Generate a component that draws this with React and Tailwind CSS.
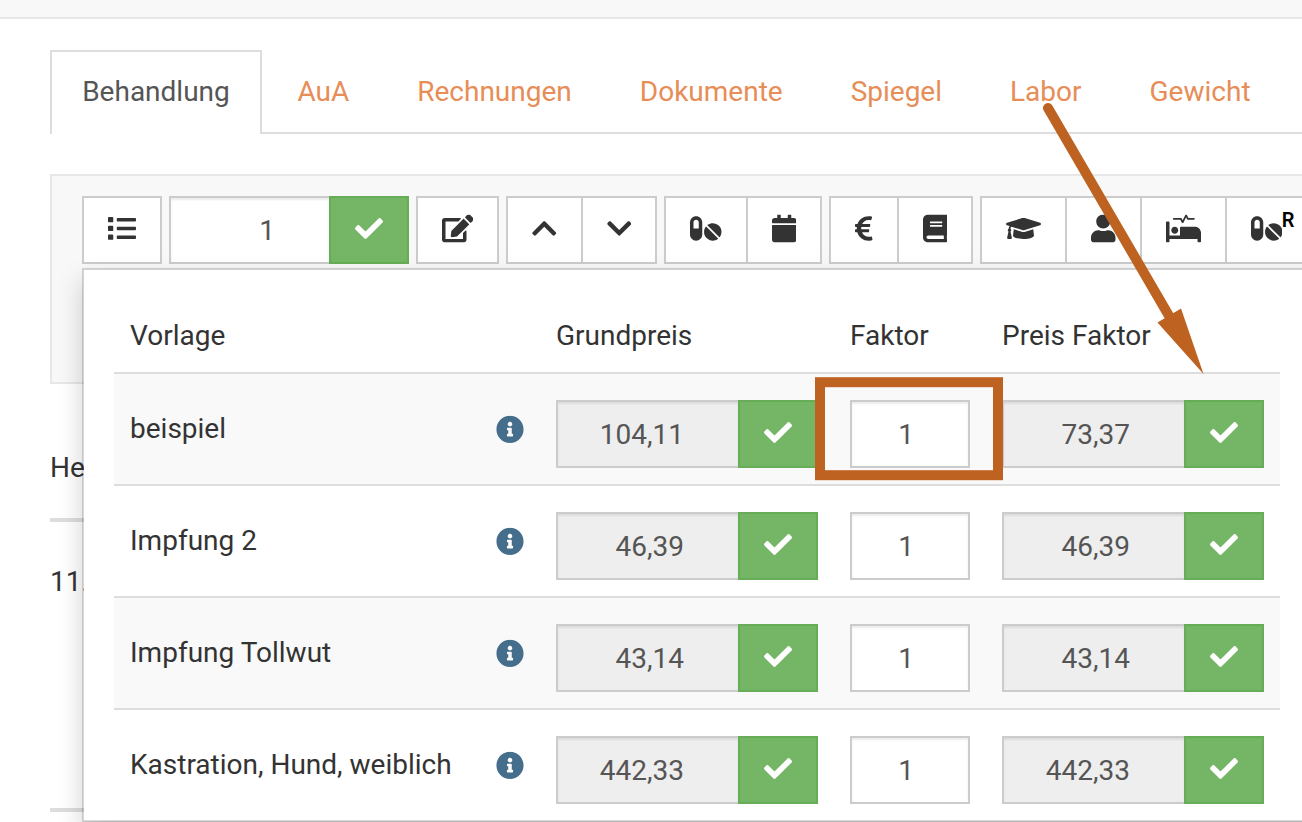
import {
  FaBook, FaCalendar, FaCheck, FaChevronDown, FaChevronUp, FaEdit, FaEuroSign,
  FaGraduationCap, FaInfoCircle, FaList, FaPills, FaProcedures, FaUser,
} from "react-icons/fa";

const tabs = ["AuA", "Rechnungen", "Dokumente", "Spiegel", "Labor", "Gewicht"];

const rows = [
  { name: "beispiel", base: "104,11", factor: "1", price: "73,37" },
  { name: "Impfung 2", base: "46,39", factor: "1", price: "46,39" },
  { name: "Impfung Tollwut", base: "43,14", factor: "1", price: "43,14" },
  { name: "Kastration, Hund, weiblich", base: "442,33", factor: "1", price: "442,33" },
];

function Group({ children }) {
  return <div className="flex shrink-0">{children}</div>;
}

function ToolButton({ children, joined = false }) {
  return (
    <button
      className={`flex h-[68px] shrink-0 items-center justify-center border-2 border-[#ccc] bg-white px-6 pb-1 text-[#333] [&_svg]:translate-y-[0.4px] ${joined ? "-ml-0.5" : ""}`}
    >
      {children}
    </button>
  );
}

function Confirm() {
  return (
    <button className="flex h-[68px] w-20 shrink-0 items-center justify-center border-2 border-[#67ad57] bg-[#75b666] pb-1 text-white">
      <FaCheck className="h-7 w-7 translate-y-[0.5px]" />
    </button>
  );
}

function PriceField({ value }) {
  return (
    <div className="flex">
      <div className="flex h-[68px] w-[182px] items-center justify-end border-2 border-r-0 border-[#ccc] bg-[#eee] pr-[54px] pt-0.5 text-[#555] shadow-[inset_0_2px_2px_rgba(0,0,0,0.075)]">
        {value}
      </div>
      <Confirm />
    </div>
  );
}

function TemplateRow({ row, striped }) {
  return (
    <div
      className={`grid h-28 grid-cols-[426px_294px_152px_294px] border-t-2 border-[#ddd] pt-[26px] ${striped ? "bg-[#f9f9f9]" : "bg-white"}`}
    >
      <div className="flex h-[58px] items-center justify-between px-4">
        <span>{row.name}</span>
        <FaInfoCircle className="h-7 w-7 translate-y-[0.4px] text-[#446e8c]" />
      </div>
      <div className="px-4">
        <PriceField value={row.base} />
      </div>
      <div className="px-4">
        <div className="flex h-[68px] w-[120px] items-center justify-end border-2 border-[#ccc] bg-white pr-[54px] pt-0.5 text-[#555] shadow-[inset_0_2px_2px_rgba(0,0,0,0.075)]">
          {row.factor}
        </div>
      </div>
      <div className="px-4">
        <PriceField value={row.price} />
      </div>
    </div>
  );
}

function TemplateMenu() {
  return (
    <div className="absolute left-[82px] top-[268px] h-[554px] w-[1260px] border-2 border-black/15 bg-white bg-clip-padding px-[30px] shadow-[0_12px_24px_rgba(0,0,0,0.175)]">
      <div className="w-[1166px]">
        <div className="grid h-[102px] grid-cols-[426px_294px_152px_294px] pt-[46px]">
          <div className="px-4">Vorlage</div>
          <div className="px-4">Grundpreis</div>
          <div className="px-4">Faktor</div>
          <div className="px-4">Preis Faktor</div>
        </div>
        {rows.map((row, i) => (
          <TemplateRow key={row.name} row={row} striped={i % 2 === 0} />
        ))}
      </div>
    </div>
  );
}

function Annotations() {
  return (
    <svg className="pointer-events-none absolute left-0 top-0" width="1302" height="822" viewBox="0 0 1302 822">
      <rect x="820" y="382.2" width="178" height="93" fill="none" stroke="#bd6220" strokeWidth="10" />
      <line x1="1048" y1="108" x2="1172" y2="321" stroke="#bd6220" strokeWidth="10" strokeLinecap="round" />
      <path d="M1203.5 374 L1157.5 322.5 L1181 308.5 Z" fill="#bd6220" />
    </svg>
  );
}

export default function App() {
  return (
    <div className="relative h-[822px] w-[1302px] overflow-hidden bg-white font-['Roboto',sans-serif] text-[28px] leading-10 text-[#333]">
      <div className="h-[19px] border-b-2 border-[#e7e7e7] bg-[#f8f8f8]" />

      <div className="pl-[50px] pt-[31px]">
        <nav className="flex h-[84px] w-[1300px]">
          <div className="flex w-[212px] shrink-0 items-center justify-center border-2 border-b-0 border-[#ddd] pb-[3px] text-[#555]">
            Behandlung
          </div>
          <div className="flex grow items-center border-b-2 border-[#ddd] pl-[3.4px] text-[#e78d57]">
            {tabs.map((tab) => (
              <div key={tab} className="mr-1 shrink-0 px-8 pt-px">{tab}</div>
            ))}
          </div>
        </nav>

        <div className="mt-10 h-[210px] w-[1300px] border-2 border-[#e7e7e7] bg-[#f8f8f8] pl-[30px] pt-5">
          <div className="flex gap-[6.98px]">
            <Group>
              <ToolButton><FaList className="h-7 w-7" /></ToolButton>
            </Group>
            <Group>
              <div className="flex h-[68px] w-40 items-center justify-end border-2 border-r-0 border-[#ccc] bg-white pr-[54px] pt-0.5 text-[#555] shadow-[inset_0_2px_2px_rgba(0,0,0,0.075)]">
                1
              </div>
              <Confirm />
            </Group>
            <Group>
              <ToolButton><FaEdit className="h-7 w-[31.5px]" /></ToolButton>
            </Group>
            <Group>
              <ToolButton><FaChevronUp className="h-7 w-[24.5px]" /></ToolButton>
              <ToolButton joined><FaChevronDown className="h-7 w-[24.5px]" /></ToolButton>
            </Group>
            <Group>
              <ToolButton><FaPills className="h-7 w-[31.5px]" /></ToolButton>
              <ToolButton joined><FaCalendar className="h-7 w-[24.5px]" /></ToolButton>
            </Group>
            <Group>
              <ToolButton><FaEuroSign className="h-7 w-[17.5px]" /></ToolButton>
              <ToolButton joined><FaBook className="h-7 w-[24.5px]" /></ToolButton>
            </Group>
            <Group>
              <ToolButton><FaGraduationCap className="h-7 w-[35px]" /></ToolButton>
              <ToolButton joined><FaUser className="h-7 w-[24.5px]" /></ToolButton>
              <ToolButton joined><FaProcedures className="h-7 w-[35px]" /></ToolButton>
              <ToolButton joined>
                <FaPills className="h-7 w-[31.5px]" />
                <span className="-ml-[0.7px] -mt-4 text-[20px] font-semibold leading-5 text-black">R</span>
              </ToolButton>
            </Group>
          </div>
        </div>

        <div className="mt-16 h-[74px] border-b-4 border-[#ddd]">Heute</div>
        <div className="h-[290px] border-b-4 border-[#ddd] pt-10">11.</div>
      </div>

      <TemplateMenu />
      <Annotations />
    </div>
  );
}
